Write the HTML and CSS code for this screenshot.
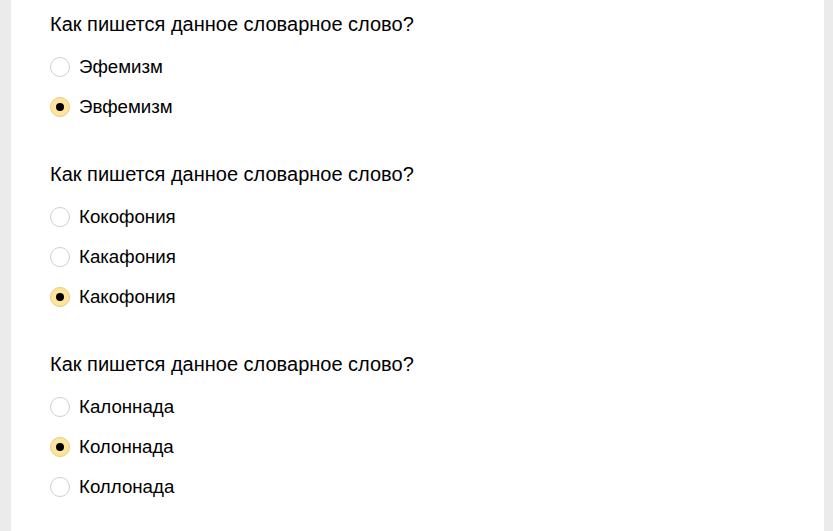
FILE: index.html
```html
<!DOCTYPE html>
<html lang="ru">
<head>
    <meta charset="UTF-8">
    <title>Словарные слова</title>
    <link rel="stylesheet" href="styles.css">
</head>
<body>
    <div class="page">
        <div class="question">
            <div class="question-title">Как пишется данное словарное слово?</div>
            <label class="option"><span class="radio"></span>Эфемизм</label>
            <label class="option"><span class="radio checked"></span>Эвфемизм</label>
        </div>

        <div class="question">
            <div class="question-title">Как пишется данное словарное слово?</div>
            <label class="option"><span class="radio"></span>Кокофония</label>
            <label class="option"><span class="radio"></span>Какафония</label>
            <label class="option"><span class="radio checked"></span>Какофония</label>
        </div>

        <div class="question">
            <div class="question-title">Как пишется данное словарное слово?</div>
            <label class="option"><span class="radio"></span>Калоннада</label>
            <label class="option"><span class="radio checked"></span>Колоннада</label>
            <label class="option"><span class="radio"></span>Коллонада</label>
        </div>
    </div>
</body>
</html>
```

FILE: styles.css
```css
html, body {
    margin: 0;
    height: 100%;
}
body {
    background: #ebebeb;
    font-family: Arial, "Liberation Sans", sans-serif;
    color: #000;
    overflow: hidden;
}
.page {
    background: #fff;
    margin: 0 9px 0 11px;
    min-height: 100%;
    padding: 12px 39px 0;
    box-sizing: border-box;
}
.question {
    margin-bottom: 35px;
}
.question-title {
    font-size: 20px;
    line-height: 24px;
    margin-bottom: 11px;
}
.option {
    display: flex;
    align-items: center;
    gap: 9px;
    height: 40px;
    font-size: 18.7px;
}
.radio {
    width: 18px;
    height: 18px;
    border: 1px solid #d0d0d0;
    border-radius: 50%;
    background: #fff;
    flex: none;
    display: flex;
    align-items: center;
    justify-content: center;
}
.radio.checked {
    background: #ffe49c;
    border-color: #e6cc85;
}
.radio.checked::after {
    content: "";
    width: 8px;
    height: 8px;
    border-radius: 50%;
    background: #000;
}
```
